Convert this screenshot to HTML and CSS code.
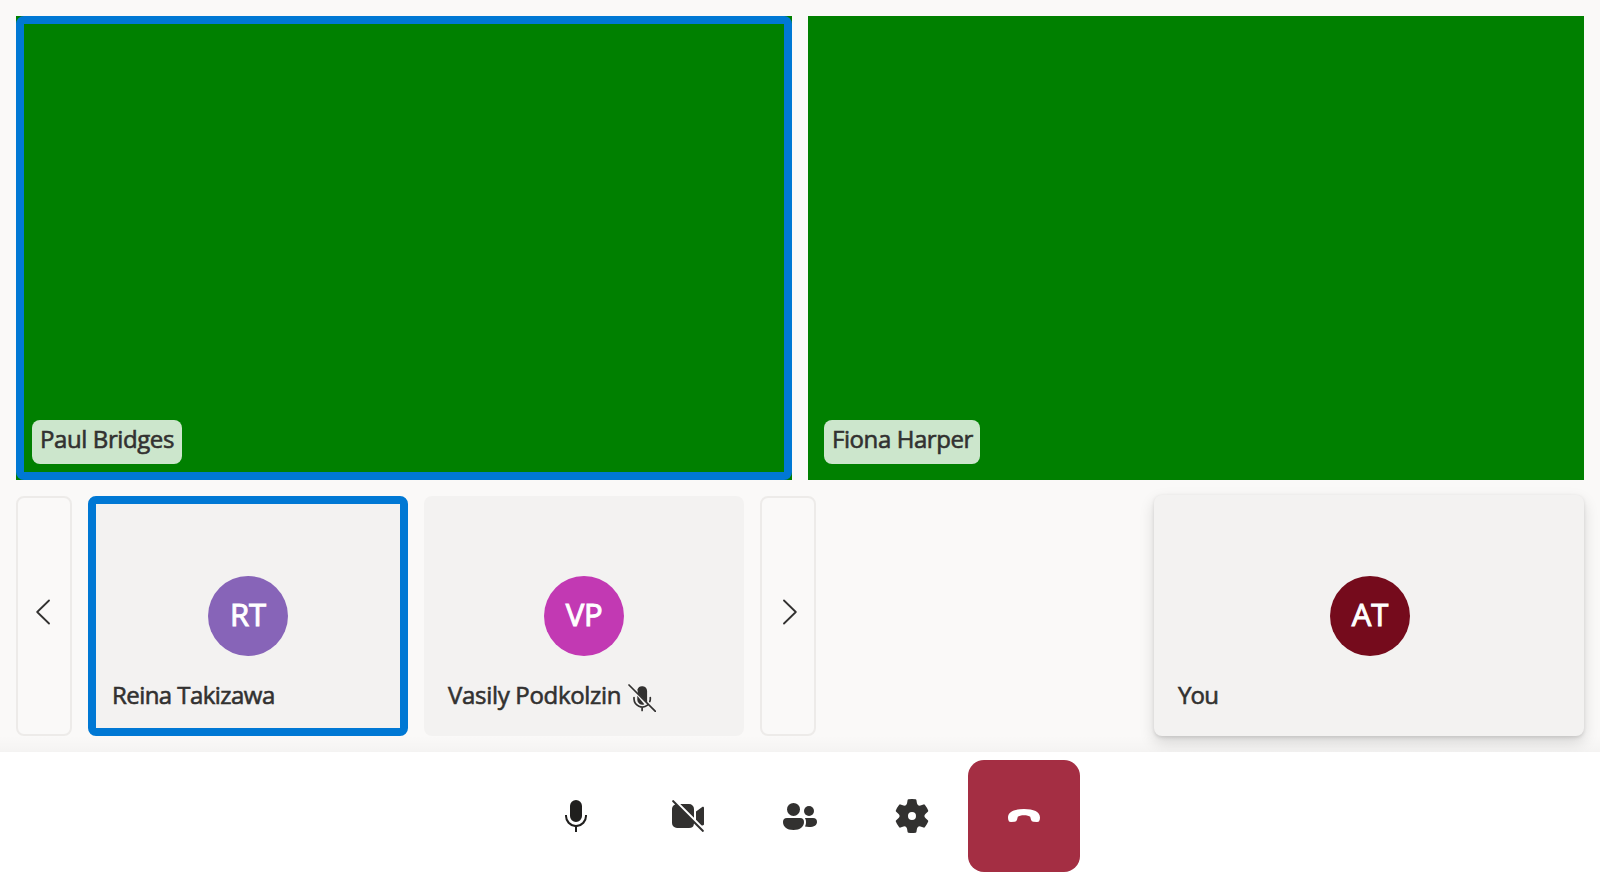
FILE: index.html
```html
<!DOCTYPE html>
<html lang="en">
<head>
<meta charset="utf-8">
<title>Call</title>
<link rel="stylesheet" href="styles.css">
</head>
<body>
<main class="stage">
  <section class="grid">
    <article class="video speaking"><span class="label paul">Paul Bridges</span></article>
    <article class="video"><span class="label fiona">Fiona Harper</span></article>
  </section>
  <section class="strip">
    <button class="pager" aria-label="Previous"><svg class="chevron" viewBox="0 0 14 26"><path d="M13 1.500 1.200 13 13 24.500"/></svg></button>
    <article class="tile speaking"><span class="avatar purple">RT</span><span class="name reina">Reina Takizawa</span></article>
    <article class="tile"><span class="avatar magenta">VP</span><span class="name vasily">Vasily Podkolzin</span>
      <svg class="muted" viewBox="0 0 28 28"><path d="M10 9.5 19 18.5A4.9 4.9 0 0 0 19.100 16V7a5 5 0 0 0-9.700-1.500ZM9.300 11.800V16a4.900 4.900 0 0 0 7 4.300Z"/><path class="line" d="M6 13.500V15a8.400 8.400 0 0 0 13.500 6.200M22.300 13.500V15a8 8 0 0 1-.5 2.500M14.100 23v3.500M1 1l26.500 26.500"/></svg>
    </article>
    <button class="pager" aria-label="Next"><svg class="chevron" viewBox="0 0 14 26"><path d="M1 1.500 12.800 13 1 24.500"/></svg></button>
    <article class="tile local"><span class="avatar maroon">AT</span><span class="name you">You</span></article>
  </section>
</main>
<footer class="controls">
  <button class="control" aria-label="Microphone"><svg class="icon mic" viewBox="0 0 20 20"><path d="M5.500 9.500h-1v.5a5.500 5.500 0 0 0 5 5.480V18h1v-2.520a5.500 5.500 0 0 0 5-5.480v-.5h-1v.5a4.500 4.500 0 0 1-9 0ZM13 10a3 3 0 0 1-6 0V5a3 3 0 0 1 6 0Z"/></svg></button>
  <button class="control" aria-label="Camera"><svg class="icon" viewBox="0 0 20 20"><path d="M2.850 2.150a.5.5 0 0 0-.7.7l1.420 1.420A2.500 2.500 0 0 0 2 6.500v7A2.500 2.500 0 0 0 4.500 16h6a2.500 2.500 0 0 0 2.490-2.300l4.160 4.150a.5.5 0 0 0 .7-.7ZM6.120 4 13 10.880V6.500A2.500 2.500 0 0 0 10.500 4ZM14 11.880l2.700 2.700c.6.400 1.300.100 1.300-.400V5.900c0-.5-.5-.7-.9-.4L14 7.800Z"/></svg></button>
  <button class="control" aria-label="People"><svg class="icon" viewBox="0 0 20 20"><circle cx="6.750" cy="6.700" r="3.250"/><circle cx="14.500" cy="7.500" r="2.500"/><path d="M1.500 13a2 2 0 0 1 2-2H10a2 2 0 0 1 2 2c0 2.300-1.900 4-5.250 4S1.500 15.300 1.500 13ZM12.400 11h4.100a2 2 0 0 1 2 2c0 1.500-1.400 2.500-4 2.500-.8 0-1.400-.1-2-.250.400-.8.500-1.600.500-2.250 0-.8-.2-1.500-.6-2Z"/></svg></button>
  <button class="control" aria-label="Settings"><svg class="icon" viewBox="0 0 20 20"><path fill-rule="evenodd" d="M8.200 1.600Q10 1.350 11.800 1.600 12.100 1.700 12.200 2L12.500 3.700Q12.900 5 14.200 4.800L15.800 4.200Q16.200 4.100 16.400 4.400 17.500 5.800 18.100 7.300 18.200 7.700 17.900 7.900L16.700 9Q15.700 10 16.700 11L17.900 12.100Q18.200 12.300 18.100 12.700 17.500 14.200 16.400 15.600 16.200 15.900 15.800 15.800L14.200 15.200Q12.900 15 12.500 16.300L12.200 18Q12.100 18.300 11.800 18.400 10 18.650 8.200 18.400 7.900 18.300 7.800 18L7.500 16.300Q7.100 15 5.800 15.200L4.200 15.800Q3.800 15.900 3.600 15.600 2.500 14.200 1.900 12.700 1.800 12.300 2.100 12.100L3.300 11Q4.300 10 3.300 9L2.100 7.900Q1.800 7.700 1.900 7.300 2.500 5.800 3.600 4.400 3.800 4.100 4.200 4.200L5.800 4.800Q7.100 5 7.500 3.700L7.800 2Q7.900 1.700 8.200 1.600ZM10 8a2 2 0 1 0 0 4 2 2 0 0 0 0-4Z"/></svg></button>
  <button class="control hangup" aria-label="Leave"><svg class="icon" viewBox="0 0 20 20"><path d="M18 10.700l-.1 1a1.400 1.400 0 0 1-1.500 1.250l-1.700-.1a1.400 1.400 0 0 1-1.200-1l-.4-1.500C12.300 9.300 7.700 9.300 6.900 10.350l-.4 1.500a1.400 1.400 0 0 1-1.200 1l-1.700.1a1.400 1.400 0 0 1-1.500-1.250L2 10.700C2 7.900 5.200 6.500 10 6.500s8 1.400 8 4.200Z"/></svg></button>
</footer>
</body>
</html>
```
FILE: styles.css
```css
* { box-sizing: border-box; }
body {
  margin: 0;
  width: 1600px;
  height: 880px;
  display: flex;
  flex-direction: column;
  overflow: hidden;
  background: #fff;
  color: #323130;
  font: 500 24px/32px "Open Sans", "Noto Sans", sans-serif;
}
button { border: 0; padding: 0; background: none; color: inherit; }
svg { display: block; fill: currentColor; }
.stage {
  height: 752px;
  padding: 16px;
  display: flex;
  flex-direction: column;
  gap: 16px;
  background: #faf9f8;
  overflow: hidden;
  position: relative;
}
.stage::after {
  content: "";
  position: absolute;
  inset: auto 0 0;
  height: 16px;
  background: linear-gradient(transparent, rgba(0, 0, 0, .025));
}
.grid { height: 464px; display: grid; grid-template-columns: 1fr 1fr; gap: 16px; }
.video { position: relative; display: flex; align-items: flex-end; padding: 16px; background: #008000; }
.speaking { position: relative; }
.speaking::after {
  content: "";
  position: absolute;
  inset: 0;
  border: 8px solid #0078d4;
  border-radius: 8px;
}
.label {
  height: 44px;
  padding: 3px 8px 5px;
  border-radius: 8px;
  background: rgba(255, 255, 255, .8);
  white-space: nowrap;
}
.label, .name { -webkit-text-stroke: .6px currentColor; }
.paul { width: 150px; letter-spacing: -.4px; }
.fiona { width: 156px; letter-spacing: -.42px; }
.strip { height: 240px; display: flex; gap: 16px; }
.pager {
  width: 56px;
  border: 2px solid #edebe9;
  border-radius: 8px;
  display: flex;
  align-items: center;
  justify-content: center;
  padding: 0 3px 8px 0;
}
.pager:nth-of-type(2) { padding: 0 0 8px 3px; }
.chevron { width: 14px; height: 26px; fill: none; stroke: currentColor; stroke-width: 1.8; stroke-linecap: round; stroke-linejoin: round; }
.tile {
  width: 320px;
  padding: 80px 24px 24px;
  border-radius: 8px;
  background: #f3f2f1;
  display: grid;
  grid-template-columns: auto 1fr;
  grid-template-rows: 80px 1fr;
  column-gap: 7px;
}
.avatar {
  grid-column: 1 / -1;
  justify-self: center;
  width: 80px;
  height: 80px;
  border-radius: 50%;
  color: #fff;
  font-size: 31px;
  line-height: 77px;
  text-align: center;
  letter-spacing: -.2px;
  -webkit-text-stroke: 1px currentColor;
}
.purple { background: #8764b8; }
.magenta { background: #c239b3; }
.maroon { background: #750b1c; }
.name { align-self: end; margin-bottom: 1px; white-space: nowrap; }
.muted { width: 28px; height: 28px; align-self: end; }
.muted .line { fill: none; stroke: currentColor; stroke-width: 1.700; stroke-linecap: round; }
.reina { letter-spacing: -.55px; }
.vasily { letter-spacing: -.31px; }
.you { letter-spacing: -.8px; }
.local {
  width: 430px;
  height: 241px;
  margin: -1px 0 0 auto;
  padding: 81px 23px 24px 24px;
  box-shadow: 0 6.400px 14.400px rgba(0, 0, 0, .132), 0 1.200px 3.600px rgba(0, 0, 0, .108);
}
.maroon { position: relative; left: .5px; }
.controls { height: 128px; padding: 8px 0; display: flex; justify-content: center; background: #fff; }
.control { width: 112px; height: 112px; display: flex; align-items: center; justify-content: center; border-radius: 16px; }
.icon { width: 40px; height: 40px; }
.mic { color: #201f1e; }
.hangup { background: #a42e43; color: #fff; }
```
